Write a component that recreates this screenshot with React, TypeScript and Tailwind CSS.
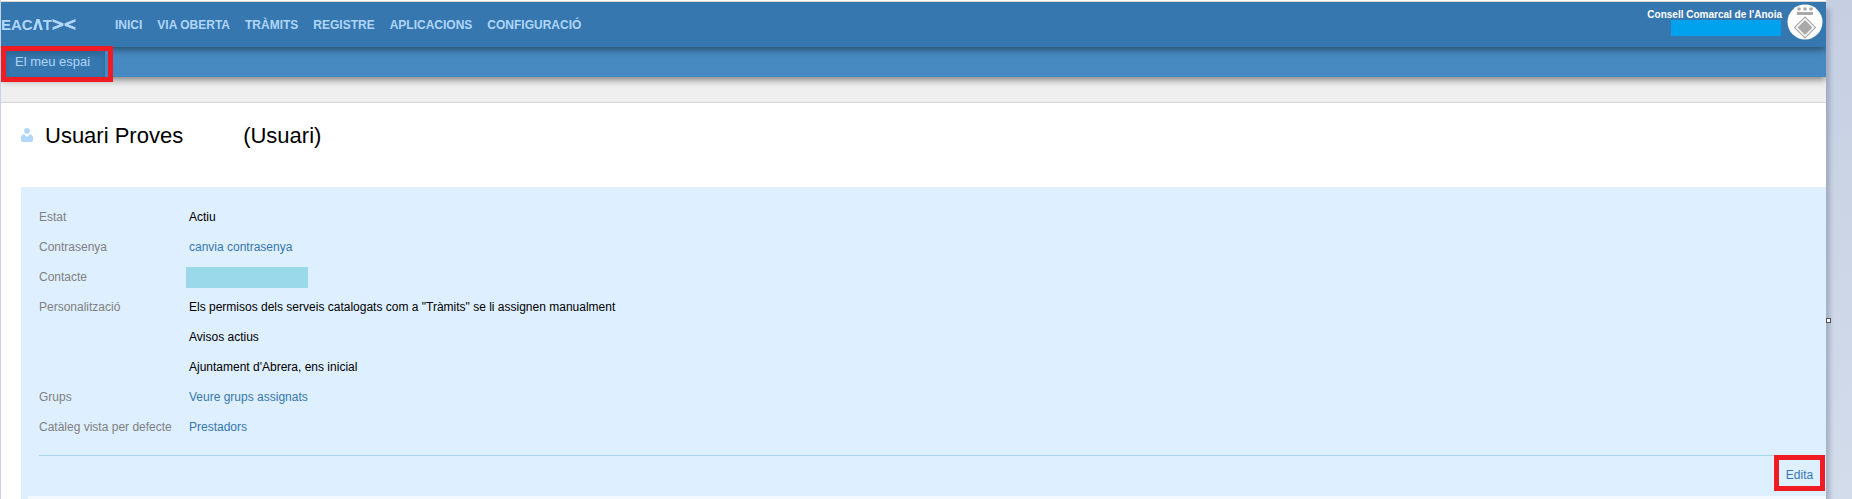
import type { ReactNode } from "react";

const navItems = ["INICI", "VIA OBERTA", "TRÀMITS", "REGISTRE", "APLICACIONS", "CONFIGURACIÓ"];

function Logo() {
  return (
    <a href="#" aria-label="EACAT" className="flex h-4 w-[114px] items-center text-[15px] leading-4 font-bold text-[#b0d6fb]">
      <span className="flex items-center">
        EAC
        <svg viewBox="0 0 10 11" className="h-[11px] w-[10px]" fill="currentColor">
          <path d="M0 11 L3.600 0 H6.400 L10 11 H7.200 L5 3.500 L2.800 11 Z" />
        </svg>
        T
      </span>
      <svg viewBox="0 0 24 11" className="h-[11px] w-6" fill="currentColor">
        <path d="M0.500 0 L11.500 4.300 V6.700 L0.500 11 V8.200 L7.500 5.500 L0.500 2.800 Z" />
        <path d="M23.500 0 L12.500 4.300 V6.700 L23.500 11 V8.200 L16.500 5.500 L23.500 2.800 Z" />
      </svg>
    </a>
  );
}

function Crest() {
  return (
    <svg viewBox="0 0 36 36" className="h-9 w-9 shrink-0" aria-hidden="true">
      <circle cx="18" cy="18" r="17.5" fill="#fff" />
      <g fill="#a9a9a9">
        <circle cx="12" cy="5" r="1.8" />
        <circle cx="18" cy="5" r="1.8" />
        <circle cx="24" cy="5" r="1.8" />
        <rect x="10" y="8" width="16" height="3" />
        <path d="M18 16 L25.500 23.500 L18 31 L10.500 23.500 Z" />
      </g>
      <path d="M18 13 L28.500 23.500 L18 34 L7.500 23.500 Z" fill="none" stroke="#a9a9a9" strokeWidth="1.2" />
    </svg>
  );
}

function UserIcon() {
  return (
    <svg viewBox="0 0 12 14" className="h-[14px] w-3" fill="#b0d6fb" aria-hidden="true">
      <circle cx="6" cy="2.900" r="2.900" />
      <path d="M3 6.300 L6 9 L9 6.300 C11 6.500 12 8 12 10 V12 C12 13.300 11.300 14 10 14 H2 C0.700 14 0 13.300 0 12 V10 C0 8 1 6.500 3 6.300 Z" />
    </svg>
  );
}

function Row({ label, children }: { label: string; children: ReactNode }) {
  return (
    <div className="flex">
      <dt className="w-[150px] shrink-0 text-[#808080]">{label}</dt>
      <div className="grow">{children}</div>
    </div>
  );
}

function ValueLink({ children }: { children: ReactNode }) {
  return (
    <a href="#" className="text-[#3577ae]">
      {children}
    </a>
  );
}

export default function App() {
  return (
    <div className="flex min-h-screen bg-linear-to-b from-[#c6cfe1] to-[#d3dceb] pr-[26px] font-['Liberation_Sans',Arial,sans-serif] text-xs text-black">
      <div className="flex grow flex-col border-l border-[#c8d2e6] bg-white shadow-[4px_9px_4px_rgba(70,85,120,0.3)]">
        <header className="relative z-20 mt-px flex h-[46px] items-center border-t border-[#d8d8d8] bg-[#3577ae] shadow-[0_2px_8px_rgba(0,0,0,0.5)] [clip-path:inset(0_0_-12px_0)]">
          <Logo />
          <nav className="flex grow gap-[15px] font-bold text-[#b0d6fb]">
            {navItems.map((item) => (
              <a key={item} href="#">
                {item}
              </a>
            ))}
          </nav>
          <div className="flex items-start gap-[5px] pr-[3px] pb-[5px]">
            <div className="flex flex-col items-end pt-[5px] text-[10px] leading-[11px] font-bold text-white">
              <span>Consell Comarcal de l'Anoia</span>
              <span className="mr-px h-4 w-[110px] bg-[#00a2ed]" />
            </div>
            <Crest />
          </div>
        </header>

        <div className="relative z-10 flex h-[30px] bg-[#478ac2] shadow-[0_2px_8px_rgba(0,0,0,0.55)] [clip-path:inset(-12px_0_-12px_0)]">
          <div className="h-[30px] w-28" />
        </div>

        <div className="h-[26px] border-b border-[#d4d4d4] bg-[#efefef]">
          <div className="relative z-30 -mt-[31px] flex h-9 w-28 border-[5px] border-[#ef1c24] bg-[#478ac2] pr-[3px]">
            <a href="#" className="grow bg-[#3577ae] pl-[9px] text-[13px] leading-[22px] text-[#b0d6fb] shadow-[inset_0_4px_5px_rgba(0,0,0,0.15)]">
              El meu espai
            </a>
          </div>
        </div>

        <main className="flex grow flex-col pt-[19px] pl-5">
          <div className="flex h-[65px] items-start gap-3">
            <div className="pt-[6px]">
              <UserIcon />
            </div>
            <h1 className="flex gap-[60px] text-[22px] leading-7">
              <span>Usuari Proves</span>
              <span>(Usuari)</span>
            </h1>
          </div>

          <section className="flex grow flex-col bg-[#deefff] pt-[15px]">
            <dl className="pl-[18px] leading-[30px]">
              <Row label="Estat">
                <dd>Actiu</dd>
              </Row>
              <Row label="Contrasenya">
                <dd>
                  <ValueLink>canvia contrasenya</ValueLink>
                </dd>
              </Row>
              <Row label="Contacte">
                <dd className="-ml-[3px] flex h-[30px] items-center">
                  <span className="h-[21px] w-[122px] bg-[#99d9ea]" />
                </dd>
              </Row>
              <Row label="Personalització">
                <dd>Els permisos dels serveis catalogats com a "Tràmits" se li assignen manualment</dd>
                <dd>Avisos actius</dd>
                <dd>Ajuntament d'Abrera, ens inicial</dd>
              </Row>
              <Row label="Grups">
                <dd>
                  <ValueLink>Veure grups assignats</ValueLink>
                </dd>
              </Row>
              <Row label="Catàleg vista per defecte">
                <dd>
                  <ValueLink>Prestadors</ValueLink>
                </dd>
              </Row>
            </dl>
            <div className="mt-[13px] ml-[18px] flex h-[41px] justify-end border-t border-[#abd5f1] pr-px">
              <a href="#" className="-mt-px flex h-9 w-[51px] items-center justify-center border-[5px] border-[#ef1c24] pt-[3px] text-[#3577ae]">
                Edita
              </a>
            </div>
            <div className="ml-[7px] min-h-[3px] grow bg-[#f4f9ff]" />
          </section>
        </main>
      </div>
      <div className="relative w-0">
        <span className="absolute top-[318px] left-0 z-30 h-[5px] w-[5px] border border-[#505050] bg-white" />
      </div>
    </div>
  );
}
